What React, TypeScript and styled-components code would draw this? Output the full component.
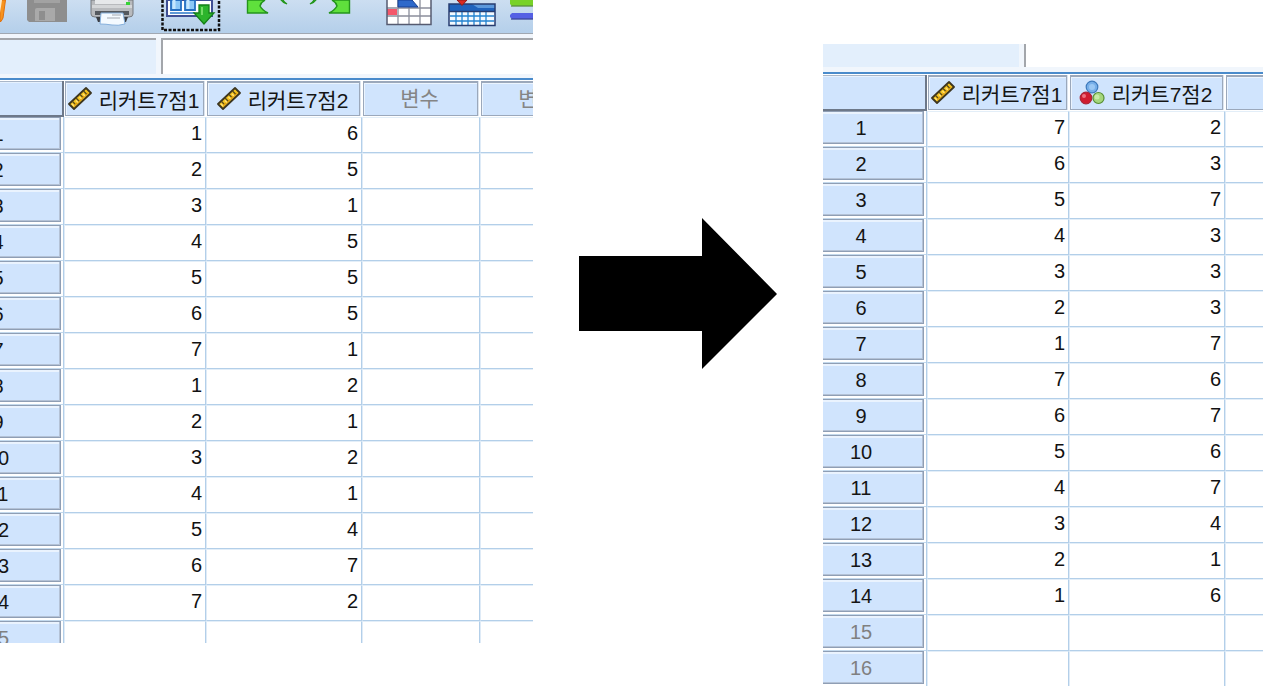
import React from "react";
import styled, { createGlobalStyle } from "styled-components";

const GlobalStyle = createGlobalStyle`
  *, *::before, *::after { box-sizing: border-box; }
  body {
    margin: 0;
    background: #fff;
    color: #111;
    font-family: "Liberation Sans", "Noto Sans CJK KR", sans-serif;
  }
`;

const Page = styled.main`
  display: grid;
  grid-template-columns: minmax(0, 533fr) minmax(0, 290fr) minmax(0, 440fr);
  align-items: start;
`;

const Panel = styled.section<{ $top: number; $visible: number }>`
  margin-top: ${(p) => p.$top}px;
  max-height: ${(p) => p.$visible}px;
  overflow: hidden;
  background: #fff;
`;

const Toolbar = styled.div`
  display: flex;
  height: 34px;
  overflow: hidden;
  background: linear-gradient(#ccdef1, #b4cfea);
  border-bottom: 1px solid #a0a8b2;
`;

const Tool = styled.button`
  flex: none;
  padding: 0;
  border: 0;
  background: none;
  line-height: 0;
`;

const EntryBar = styled.div<{ $cut: number; $short?: boolean }>`
  display: flex;
  gap: 5px;
  height: ${(p) => (p.$short ? 28 : 44)}px;
  padding: ${(p) => (p.$short ? "0 0 5px" : "4px 0 4px")};
  background: #f1f6fc;

  input {
    height: 100%;
    padding: 0 8px;
    border: 0 solid #a3a6ab;
    border-top-width: ${(p) => (p.$short ? 0 : 2)}px;
    border-radius: 0;
    font: 20px "Liberation Sans", "Noto Sans CJK KR", sans-serif;
    outline: 0;
  }
  input:first-child {
    flex: none;
    width: 221px;
    margin-left: -${(p) => p.$cut}px;
    background: #e3effc;
  }
  input:last-child {
    flex: 1;
    min-width: 0;
    border-left-width: 2px;
    background: #fff;
  }
`;

const Grid = styled.table<{ $cut: number }>`
  table-layout: fixed;
  width: 0;
  margin-left: -${(p) => p.$cut}px;
  border-collapse: separate;
  border-spacing: 0;
  font-size: 20px;
  line-height: 24px;

  th, td { padding: 0; font-weight: 400; }
`;

const GridFrame = styled.div`
  border-top: 2px solid #4a8bcb;
  padding-top: 1px;
`;

const Corner = styled.td`
  height: 36px;
  background: #d0e4fd;
  border: solid #6d7889;
  border-width: 0 2px 2px 0;
  box-shadow: inset 0 1px #a9b6c8, inset 0 2px #e6f1fe;
`;

const HeadCell = styled.th`
  height: 36px;
  padding: 0 2px 1px 1px !important;
`;

const HeadBox = styled.div<{ $unused?: boolean }>`
  display: flex;
  align-items: center;
  justify-content: center;
  gap: 7px;
  height: 35px;
  padding-right: 2px;
  border: 1px solid #9ba8bb;
  border-top-width: 2px;
  background: #d0e4fd;
  box-shadow: inset 1px 1px #ebf4fe, 1px 0 #dbe4ef;
  color: ${(p) => (p.$unused ? "#858585" : "#151515")};
  font-size: 21px;
  line-height: 28px;
  white-space: nowrap;

  span { padding-top: ${(p) => (p.$unused ? 0 : 4)}px; }
  svg { flex: none; }
`;

const RowHead = styled.th`
  height: 36px;
  padding: 0 2px 3px 0 !important;
  border-right: 1px solid #b3cfe9;
  box-shadow: inset 0 -1px #c3d9ed;
`;

const RowBox = styled.div<{ $unused?: boolean }>`
  height: 33px;
  padding-top: 4px;
  border: 1px solid #8f9eb4;
  background: #d0e4fd;
  box-shadow: inset -1px -1px #b4c2d6, inset 0 2px #eaf3fe;
  color: ${(p) => (p.$unused ? "#808080" : "#151515")};
  text-align: center;
`;

const Cell = styled.td`
  height: 36px;
  padding: 0 3px 4px 0 !important;
  border: 1px solid #b3cfe9;
  border-top-color: #e3eef8;
  border-left-color: #dfebf7;
  text-align: right;
`;

const ArrowArea = styled.div`
  padding-top: 218px;
  display: flex;
  justify-content: center;
`;

const Ruler = () => (
  <svg width="24" height="26" viewBox="0 0 24 26" aria-hidden="true">
    <path d="M1 18 L18 2 L23 7 L6 23 Z" fill="#f6c51d" stroke="#3d3620" strokeWidth="1.8" strokeLinejoin="round" />
    <path d="M6 20 L20 7" stroke="#e0a010" strokeWidth="1.5" />
    <path d="M4.500 15.500 l2.500 2.500 M8 12 l3 3 M12 8.500 l2.500 2.500 M15.500 5 l3 3" stroke="#5a4b1c" strokeWidth="1.4" />
    <path d="M4 18 l2 2 M8 14.500 l2 2 M11.500 11 l2 2 M15 8 l2 2" stroke="#ffe37a" strokeWidth="1.2" />
  </svg>
);

const Nominal = () => (
  <svg width="26" height="26" viewBox="0 0 26 26" aria-hidden="true">
    <circle cx="13" cy="7" r="5.800" fill="#77afe9" stroke="#3d79bb" strokeWidth="1.2" />
    <circle cx="13" cy="7" r="3" fill="#9bc8f4" />
    <circle cx="7" cy="18" r="5.800" fill="#d01c30" stroke="#a82437" strokeWidth="1.2" />
    <circle cx="5" cy="16" r="2" fill="#ee707e" />
    <circle cx="19.500" cy="18" r="5.500" fill="#a5d67c" stroke="#568e35" strokeWidth="1.2" />
    <circle cx="18" cy="17" r="2.500" fill="#c8eaa8" />
  </svg>
);

const tools: { label: string; width: number; art: React.ReactNode }[] = [
  {
    label: "열기",
    width: 27,
    art: (
      <>
        <path d="M0 0 H5.500 L3 18 L1 21.500 H0Z" fill="#f7931e" stroke="#e0700c" />
        <path d="M0 0 H2 L0 13Z" fill="#fde9c8" />
      </>
    ),
  },
  {
    label: "저장",
    width: 63,
    art: (
      <>
        <path d="M0 0 H40 V22 H2 L0 20Z" fill="#8e8e8e" />
        <path d="M7 0 H33 V3 H7Z" fill="#a2a2a2" />
        <path d="M8 21 V10 Q8 8 10 8 H28 V21Z" fill="#a9a9a9" />
        <path d="M12 11 h6 v9 h-6z" fill="#8e8e8e" />
      </>
    ),
  },
  {
    label: "인쇄",
    width: 71,
    art: (
      <>
        <path d="M1 0 H43 V14 Q43 17 39 17 H5 Q1 17 1 14Z" fill="#b8babd" stroke="#777b80" />
        <path d="M5 0 H38 V4 H5Z" fill="#e6e8ea" />
        <path d="M2 5 H42 V8 H2Z" fill="#d4d6d8" />
        <path d="M36 2 h4 v3 h-4z" fill="#36d336" />
        <path d="M5 11 H39 V15 H5Z" fill="#55595e" />
        <path d="M6 17 H10 V22 H8Z M34 17 H38 L36 22 H34Z" fill="#3a3d42" />
        <path d="M11 13 H33 L35 24 Q28 26 22 25 T10 24Z" fill="#f4faff" stroke="#86b0dc" />
        <path d="M17 18 h13 M22 15 h9" stroke="#a2a8b0" />
      </>
    ),
  },
  {
    label: "변수 불러오기",
    width: 85,
    art: (
      <>
        <path d="M1.500 0 V30 H58 V0" fill="none" stroke="#111" strokeWidth="2.5" strokeDasharray="3 1.5" />
        <path d="M6 0 H51 V16 H6Z" fill="#fff" stroke="#3f4f94" strokeWidth="2" />
        <path d="M10 0 h10 v10 h-10z M24 0 h10 v10 h-10z" fill="#8cc8f7" stroke="#246fc2" strokeWidth="1.8" />
        <path d="M13 0 v9 M27 0 v9" stroke="#c4e6fe" strokeWidth="3" />
        <path d="M9 13 H34" stroke="#2a77c8" strokeWidth="1.5" />
        <path d="M38 5 H48 V13 H53 L43 24 L33 13 H38Z" fill="#2cb42c" stroke="#168018" strokeWidth="1.3" />
        <path d="M41 7 v8" stroke="#75dc66" strokeWidth="2" />
      </>
    ),
  },
  {
    label: "실행 취소",
    width: 63,
    art: (
      <>
        <path d="M1.500 0 V13 H22 Q16 10 14 6 Q15 2 19 0Z" fill="#5fe03c" stroke="#24941c" strokeWidth="1.4" />
        <path d="M35 0 Q37 3 41 4 Q38 2 37 0Z" fill="#4edb35" stroke="#24941c" strokeWidth="1.2" />
      </>
    ),
  },
  {
    label: "다시 실행",
    width: 77,
    art: (
      <>
        <path d="M40.500 0 V13 H20 Q26 10 28 6 Q27 2 23 0Z" fill="#5fe03c" stroke="#24941c" strokeWidth="1.4" />
        <path d="M7 0 Q5 3 1 4 Q4 2 5 0Z" fill="#4edb35" stroke="#24941c" strokeWidth="1.2" />
      </>
    ),
  },
  {
    label: "케이스로 이동",
    width: 62,
    art: (
      <>
        <path d="M1 0 H45 V24 H1Z" fill="#fff" />
        <path d="M1 9 h10 v6 h-10z" fill="#f4576a" />
        <path d="M12 0 V24 M23 0 V24 M34 0 V24 M1 8 H45 M1 16 H45" stroke="#8c8f9c" strokeWidth="1.3" />
        <path d="M1 0 V24.500 H45 V0" fill="none" stroke="#565b70" strokeWidth="1.5" />
        <path d="M12 0 H26 L32 7 H12Z" fill="#2e69ca" stroke="#173e91" />
      </>
    ),
  },
  {
    label: "변수로 이동",
    width: 61,
    art: (
      <>
        <path d="M1 4 H47 V26 H1Z" fill="#f4faff" />
        <path d="M1 4 H47 V11 H1Z" fill="#1f63bd" />
        <path d="M24 4 H47 V8 H30Z" fill="#5b98dc" />
        <path d="M2 16 H46 M2 21 H46 M8 12 V25 M14 12 V25 M20 12 V25 M26 12 V25 M32 12 V25 M38 12 V25" stroke="#2383d0" strokeWidth="1.3" />
        <path d="M1 4 H47 V25.500 H1Z M1 11.500 H47" fill="none" stroke="#273d70" strokeWidth="1.5" />
        <path d="M9 0 H19 L14 5.500Z" fill="#d92920" stroke="#8f1c1b" />
      </>
    ),
  },
  {
    label: "변수",
    width: 24,
    art: (
      <>
        <path d="M1 0 H24 V6 H3 L1 4Z" fill="#78d229" />
        <path d="M2 6 H24" stroke="#5a8f40" strokeWidth="1.3" />
        <path d="M3 13 H24 V19 H3 L1 17 V15Z" fill="#5560e4" />
        <path d="M2 19 H24" stroke="#3c449a" strokeWidth="1.3" />
      </>
    ),
  },
];

type Column = { name: string; width: number; icon?: React.ReactNode; unused?: boolean };

type SheetProps = {
  label: string;
  cut: number;
  short?: boolean;
  columns: Column[];
  rows: number[][];
  rowCount: number;
};

const Sheet = ({ label, cut, short, columns, rows, rowCount }: SheetProps) => (
  <>
    <EntryBar $cut={cut} $short={short}>
      <input aria-label={`${label} 셀 이름`} readOnly />
      <input aria-label={`${label} 셀 값`} />
    </EntryBar>
    <GridFrame>
      <Grid $cut={cut} aria-label={label}>
        <colgroup>
          <col style={{ width: 129 }} />
          {columns.map((c, i) => (
            <col key={i} style={{ width: c.width }} />
          ))}
        </colgroup>
        <thead>
          <tr>
            <Corner />
            {columns.map((c, i) => (
              <HeadCell key={i} scope="col">
                <HeadBox $unused={c.unused}>
                  {c.icon}
                  {c.name && <span>{c.name}</span>}
                </HeadBox>
              </HeadCell>
            ))}
          </tr>
        </thead>
        <tbody>
          {Array.from({ length: rowCount }, (_, r) => (
            <tr key={r}>
              <RowHead scope="row">
                <RowBox $unused={r >= rows.length}>{r + 1}</RowBox>
              </RowHead>
              {columns.map((_c, i) => (
                <Cell key={i}>{rows[r]?.[i]}</Cell>
              ))}
            </tr>
          ))}
        </tbody>
      </Grid>
    </GridFrame>
  </>
);

const before = [
  [1, 6], [2, 5], [3, 1], [4, 5], [5, 5], [6, 5], [7, 1],
  [1, 2], [2, 1], [3, 2], [4, 1], [5, 4], [6, 7], [7, 2],
];

const after = [
  [7, 2], [6, 3], [5, 7], [4, 3], [3, 3], [2, 3], [1, 7],
  [7, 6], [6, 7], [5, 6], [4, 7], [3, 4], [2, 1], [1, 6],
];

export default function App() {
  return (
    <>
      <GlobalStyle />
      <Page>
        <Panel $top={0} $visible={643}>
          <Toolbar>
            {tools.map((t) => (
              <Tool key={t.label} type="button" aria-label={t.label}>
                <svg width={t.width} height="33" viewBox={`0 0 ${t.width} 33`} aria-hidden="true">
                  {t.art}
                </svg>
              </Tool>
            ))}
          </Toolbar>
          <Sheet
            label="변환 전"
            cut={65}
            columns={[
              { name: "리커트7점1", width: 142, icon: <Ruler /> },
              { name: "리커트7점2", width: 156, icon: <Ruler /> },
              { name: "변수", width: 118, unused: true },
              { name: "변수", width: 118, unused: true },
            ]}
            rows={before}
            rowCount={15}
          />
        </Panel>
        <ArrowArea>
          <svg width="198" height="152" viewBox="0 0 198 152" role="img" aria-label="변환">
            <path d="M0 38 H123 V0 L198 76 L123 151 V113 H0Z" fill="#000" />
          </svg>
        </ArrowArea>
        <Panel $top={44} $visible={642}>
          <Sheet
            label="변환 후"
            cut={25}
            short
            columns={[
              { name: "리커트7점1", width: 142, icon: <Ruler /> },
              { name: "리커트7점2", width: 156, icon: <Nominal /> },
              { name: "", width: 118, unused: true },
            ]}
            rows={after}
            rowCount={16}
          />
        </Panel>
      </Page>
    </>
  );
}
